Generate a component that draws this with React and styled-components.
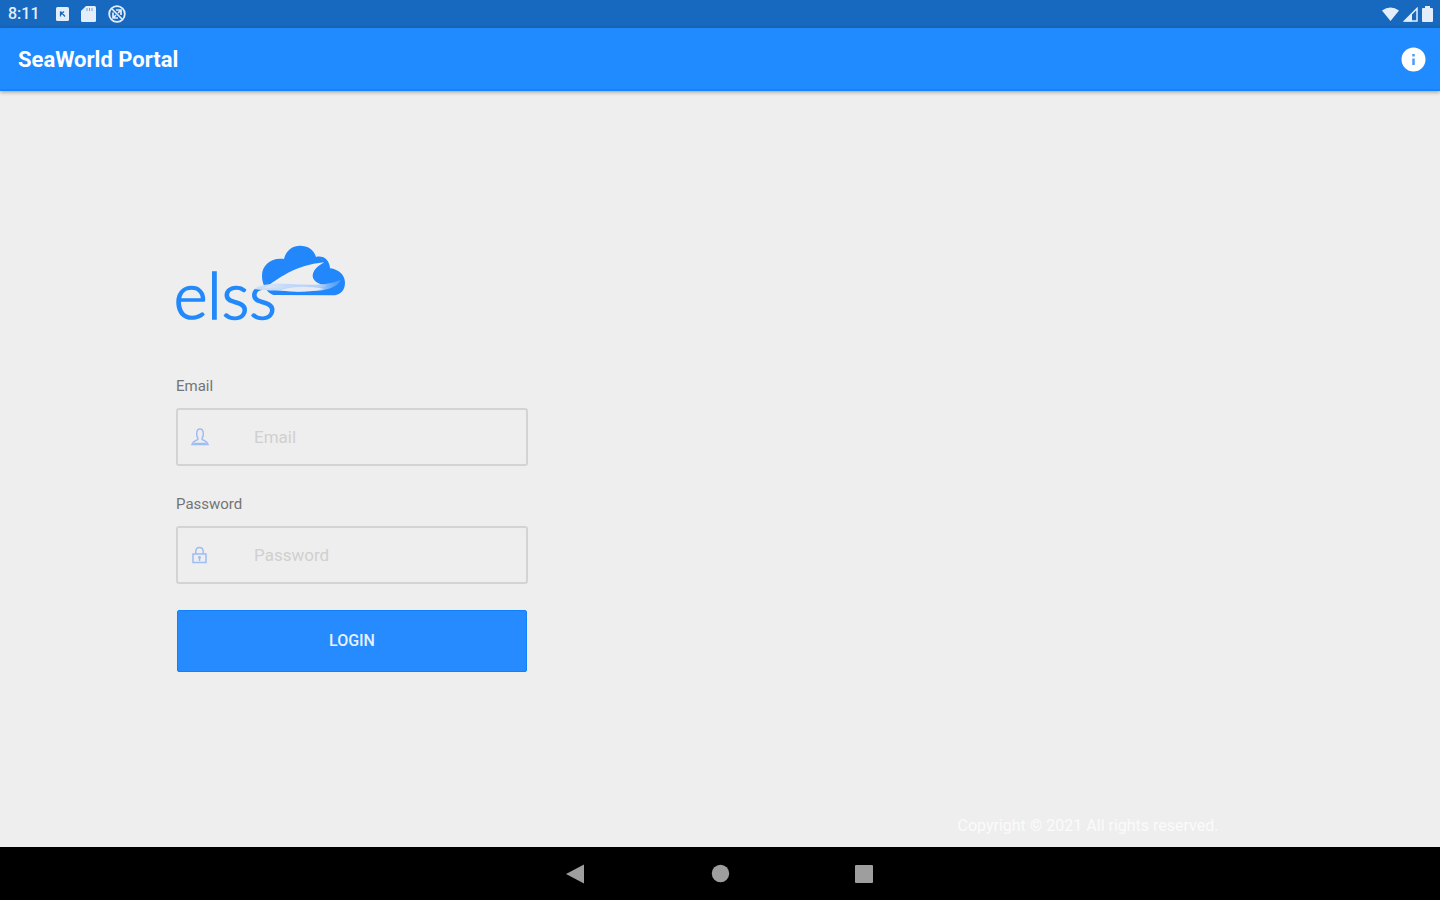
import React from "react";
import styled, { createGlobalStyle } from "styled-components";

const GlobalStyle = createGlobalStyle`
  *, *::before, *::after { box-sizing: border-box; }
  body { margin: 0; background: #eeeeee; font-family: Roboto, "Liberation Sans", sans-serif; }
`;

const Screen = styled.div`
  display: flex;
  flex-direction: column;
  min-height: 100vh;
`;

const StatusBar = styled.div`
  display: flex;
  align-items: center;
  justify-content: space-between;
  height: 28px;
  padding: 0 7px 0 8px;
  background: #1769c0;
  color: #e4eefb;
`;

const StatusGroup = styled.div`
  display: flex;
  align-items: center;
  gap: ${(p) => p.$gap}px;
`;

const Clock = styled.time`
  width: 36px;
  font-size: 16px;
  line-height: 20px;
  font-weight: 500;
`;

const AppBar = styled.header`
  display: flex;
  align-items: center;
  justify-content: space-between;
  height: 63px;
  padding: 2px 14px 0 18px;
  background: #1f8bff;
  border-bottom: 2px solid #1484fc;
  box-shadow: 0 1px 4px rgba(60, 40, 10, 0.45);
  color: #ffffff;
`;

const Title = styled.h1`
  margin: 0;
  font-size: 22px;
  line-height: 28px;
  font-weight: 700;
`;

const IconButton = styled.button`
  display: flex;
  padding: 0;
  border: 0;
  background: none;
  color: inherit;
  cursor: pointer;
`;

const Main = styled.main`
  flex: 1;
  display: grid;
  grid-template-columns: 1fr 1fr;
  column-gap: 32px;
`;

const LoginForm = styled.form`
  display: flex;
  flex-direction: column;
  align-self: center;
  justify-self: center;
  width: 50%;
  min-width: 280px;
  padding-bottom: 26px;
`;

const Logo = styled.svg`
  display: block;
  width: 180px;
  height: 90px;
  margin-bottom: 46px;
  overflow: visible;
`;

const Field = styled.div`
  display: flex;
  flex-direction: column;
  gap: 12px;
  margin-bottom: 28px;
`;

const Label = styled.label`
  font-size: 15px;
  line-height: 20px;
  color: #747474;
`;

const InputFrame = styled.div`
  display: flex;
  align-items: center;
  height: 58px;
  padding: 0 13px;
  border: 2px solid #d3d3d3;
  border-radius: 3px;
  color: #9fbcf5;
`;

const TextInput = styled.input`
  flex: 1;
  min-width: 0;
  margin-left: 45px;
  padding: 0;
  border: 0;
  outline: 0;
  background: none;
  font-family: inherit;
  font-size: 17px;
  line-height: 24px;
  color: #555555;
  &::placeholder { color: #d0d0d0; opacity: 1; }
`;

const LoginButton = styled.button`
  height: 62px;
  margin: -2px 1px 0;
  border: 1px solid #0f80ff;
  border-radius: 2px;
  background: #258bff;
  color: #e6f1ff;
  font-family: inherit;
  font-size: 16px;
  line-height: 20px;
  font-weight: 500;
  cursor: pointer;
`;

const Copyright = styled.p`
  grid-column: 2;
  align-self: end;
  margin: 0;
  padding-bottom: 11px;
  font-size: 16px;
  line-height: 20px;
  text-align: center;
  color: #fbfbfb;
`;

const NavBar = styled.nav`
  display: flex;
  align-items: center;
  justify-content: center;
  gap: 120px;
  height: 53px;
  background: #000000;
  color: #9e9e9e;
`;

function ElssLogo() {
  return (
    <Logo viewBox="33 15 540 270" role="img" aria-label="elss">
      <defs>
        <linearGradient id="haze" x1="0" x2="1" y1="0" y2="0">
          <stop offset="0" stopColor="#eeeeee" stopOpacity="0.85" />
          <stop offset="0.4" stopColor="#c3d9fa" />
          <stop offset="0.75" stopColor="#b3d0fa" />
          <stop offset="1" stopColor="#5ba3fa" stopOpacity="0.6" />
        </linearGradient>
      </defs>
      <text x="26" y="251" fontFamily="Lato, sans-serif" fontSize="194" fontWeight="300" fill="#2389fb" stroke="#2389fb" strokeWidth="5">
        elss
      </text>
      <path
        fill="#2187fb"
        d="M325 180C304 172 291 148 291 122C291 88 322 66 357 72C363 47 381 32 405 32C430 32 447 45 453 66C475 60 494 75 495 100C522 103 540 121 540 143C540 167 525 181 502 181Z"
      />
      <path
        fill="#eeeeee"
        d="M300 158C340 132 386 91 478 82C457 93 443 107 443 124C445 140 462 149 486 152L440 162Z"
      />
      <path
        fill="url(#haze)"
        d="M256 160C300 146 330 143 380 147C430 150 485 153 528 134C518 158 480 170 420 168C365 167 310 170 256 160Z"
      />
      <path fill="#eeeeee" fillOpacity="0.85" d="M348 166C380 153 430 152 478 162C425 173 385 173 348 166Z" />
    </Logo>
  );
}

export default function App() {
  return (
    <Screen>
      <GlobalStyle />
      <StatusBar>
        <StatusGroup $gap={12}>
          <Clock>8:11</Clock>
          <svg width="13" height="14" viewBox="0 0 13 14" aria-hidden="true">
            <rect width="13" height="14" rx="1.5" fill="currentColor" />
            <path d="M4.5 4.5v5M4.5 4.500 9 9.500M5 7.500 8 4.5" stroke="#1769c0" strokeWidth="1.2" fill="none" />
          </svg>
          <svg width="15" height="16" viewBox="0 0 15 16" aria-hidden="true">
            <path d="M5 0h8.5Q15 0 15 1.5v13Q15 16 13.500 16h-12Q0 16 0 14.500V5Z" fill="currentColor" />
            <path d="M6 2v3M8.500 2v3M11 2v3" stroke="#6fa3dd" strokeWidth="1" />
          </svg>
          <svg width="18" height="18" viewBox="0 0 18 18" fill="none" stroke="currentColor" aria-hidden="true">
            <circle cx="9" cy="9" r="7.800" strokeWidth="1.800" />
            <path d="M4 4l10 10M5 7.500V13h5M8 5h5v5M5 13l3-3M13 5l-3 3" strokeWidth="1.700" />
          </svg>
        </StatusGroup>
        <StatusGroup $gap={4}>
          <svg width="17" height="14" viewBox="0 0 17 14" aria-hidden="true">
            <path d="M0 3.500Q8.500-2.500 17 3.500L8.500 14Z" fill="currentColor" />
          </svg>
          <svg width="15" height="15" viewBox="0 0 15 15" aria-hidden="true">
            <path d="M1.500 14 14 1.500V14Z" fill="none" stroke="currentColor" strokeWidth="1.500" />
            <path d="M1 14.500 9 6.500V14.500Z" fill="currentColor" />
          </svg>
          <svg width="11" height="16" viewBox="0 0 11 16" aria-hidden="true">
            <path d="M3 0h5v2h2q1 0 1 1v12q0 1-1 1H1q-1 0-1-1V3q0-1 1-1h2Z" fill="currentColor" />
          </svg>
        </StatusGroup>
      </StatusBar>

      <AppBar>
        <Title>SeaWorld Portal</Title>
        <IconButton type="button" aria-label="Information">
          <svg width="25" height="25" viewBox="0 0 25 25" aria-hidden="true">
            <circle cx="12.500" cy="12.500" r="12" fill="currentColor" />
            <path d="M12.500 7v2.500M12.500 11.500v6.500" stroke="#4b9df8" strokeWidth="2.500" />
          </svg>
        </IconButton>
      </AppBar>

      <Main>
        <LoginForm onSubmit={(e) => e.preventDefault()}>
          <ElssLogo />
          <Field>
            <Label htmlFor="email">Email</Label>
            <InputFrame>
              <svg width="18" height="18" viewBox="0 0 18 18" fill="none" stroke="currentColor" strokeWidth="1.500" aria-hidden="true">
                <path d="M6.800 10C5 8 5 1 9 1s4 7 2.200 9v1.500c1.800 1 4.800 1.500 5.800 5H1c1-3.500 4-4 5.800-5Z" />
                <path d="M3 15.500h12" />
              </svg>
              <TextInput id="email" type="email" placeholder="Email" />
            </InputFrame>
          </Field>
          <Field>
            <Label htmlFor="password">Password</Label>
            <InputFrame>
              <svg width="18" height="18" viewBox="0 0 18 18" fill="none" stroke="currentColor" strokeWidth="1.500" aria-hidden="true">
                <path d="M2 8h13v8.500H2ZM4.800 8V5.500C4.800 0 12.200 0 12.200 5.500V8" />
                <path d="M8.500 10v5M7 11.500h3" />
              </svg>
              <TextInput id="password" type="password" placeholder="Password" />
            </InputFrame>
          </Field>
          <LoginButton type="submit">LOGIN</LoginButton>
        </LoginForm>
        <Copyright>Copyright © 2021 All rights reserved.</Copyright>
      </Main>

      <NavBar aria-label="System navigation">
        <IconButton type="button" aria-label="Back">
          <svg width="24" height="24" viewBox="0 0 24 24" aria-hidden="true">
            <path d="M2 12 20 2.500v19Z" fill="currentColor" />
          </svg>
        </IconButton>
        <IconButton type="button" aria-label="Home">
          <svg width="24" height="24" viewBox="0 0 24 24" aria-hidden="true">
            <circle cx="12.500" cy="11.500" r="8.700" fill="currentColor" />
          </svg>
        </IconButton>
        <IconButton type="button" aria-label="Recent apps">
          <svg width="24" height="24" viewBox="0 0 24 24" aria-hidden="true">
            <rect x="3" y="3" width="18" height="18" rx="1" fill="currentColor" />
          </svg>
        </IconButton>
      </NavBar>
    </Screen>
  );
}
